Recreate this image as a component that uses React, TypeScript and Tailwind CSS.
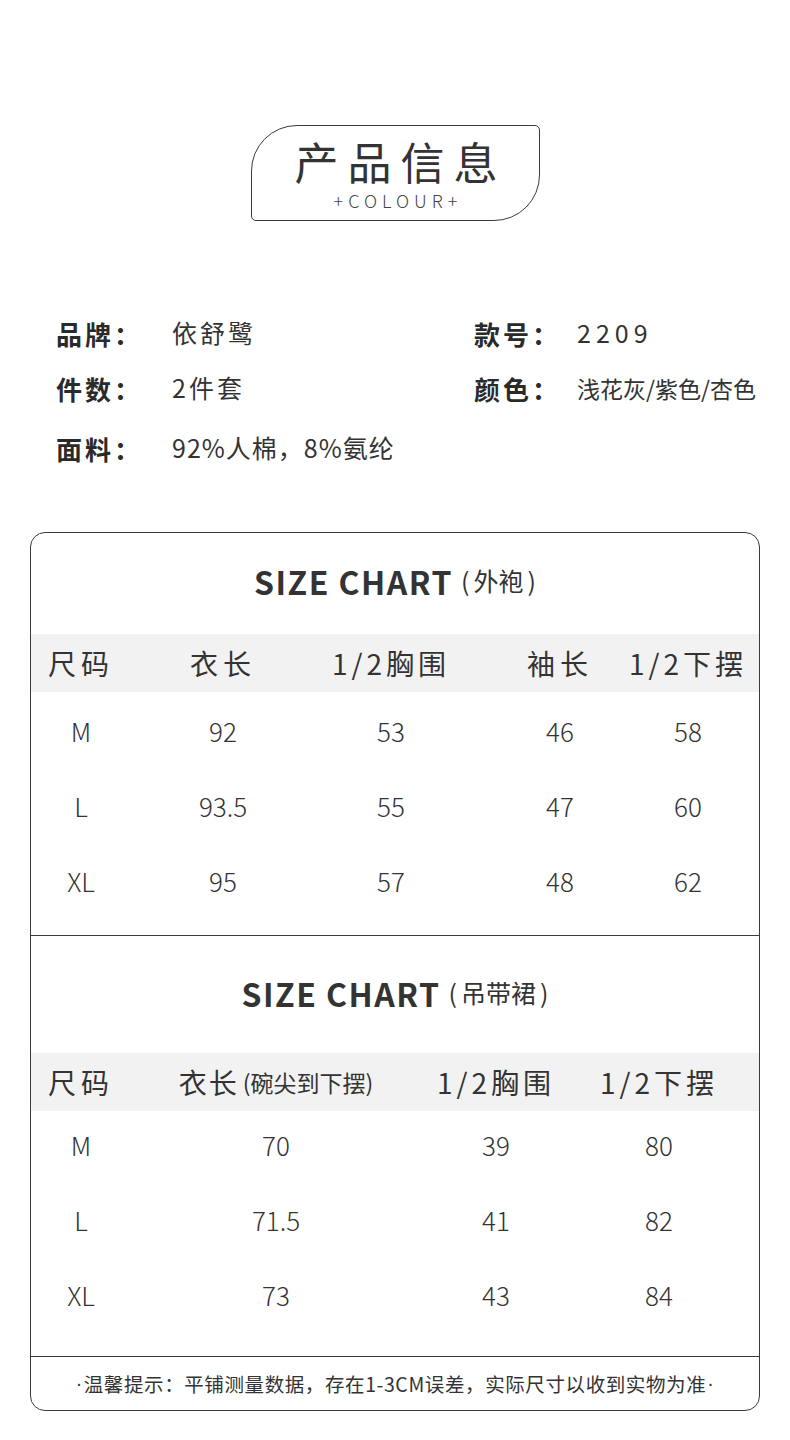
import React from "react";

const font = "font-['Noto_Sans_CJK_SC','Noto_Sans',sans-serif]";

const coat = {
  title: "(外袍)",
  cols: "grid-cols-[100px_184px_152px_186px_70px]",
  head: ["尺码", "衣长", "1/2胸围", "袖长", "1/2下摆"],
  rows: [
    ["M", "92", "53", "46", "58"],
    ["L", "93.5", "55", "47", "60"],
    ["XL", "95", "57", "48", "62"],
  ],
};

const dress = {
  title: "(吊带裙)",
  cols: "grid-cols-[100px_290px_150px_176px]",
  head: ["尺码", "衣长", "1/2胸围", "1/2下摆"],
  rows: [
    ["M", "70", "39", "80"],
    ["L", "71.5", "41", "82"],
    ["XL", "73", "43", "84"],
  ],
};

const InfoItem = ({ label, value, tight }: { label: string; value: string; tight?: boolean }) => (
  <div className="flex items-center">
    <span className="w-[116px] text-[26px] font-bold tracking-[3px] text-[#2a2a2a]">{label}</span>
    <span className={tight ? "text-[25px] tracking-[1px] text-[#333]" : "text-[25px] tracking-[3px] text-[#333]"}>
      {value}
    </span>
  </div>
);

const Chart = ({
  data,
  titleH,
  titlePb,
  bodyCls,
  dressHead,
}: {
  data: typeof coat;
  titleH: string;
  titlePb: string;
  bodyCls: string;
  dressHead?: boolean;
}) => (
  <div>
    <div className={`flex items-center justify-center ${titleH} ${titlePb}`}>
      <span className="text-[32px] font-bold tracking-[1.5px] text-[#333]">SIZE CHART</span>
      <span className="ml-2 flex items-center text-[25px] text-[#333]">
        <span className="mr-[4px]">(</span>
        {data.title.slice(1, -1)}
        <span className="ml-[4px]">)</span>
      </span>
    </div>
    <div className={`grid ${data.cols} h-[58px] items-center bg-[#f2f2f2] text-[28px] text-[#333]`}>
      {data.head.map((h, i) => (
        <div key={i} className="flex justify-center whitespace-nowrap">
          {dressHead && i === 1 ? (
            <span className="flex items-center">
              <span className="tracking-[2px]">衣长</span>
              <span className="ml-1 text-[23px]">(碗尖到下摆)</span>
            </span>
          ) : (
            <span className={h.startsWith("1/2") ? "tracking-[4px]" : "tracking-[5px]"}>{h}</span>
          )}
        </div>
      ))}
    </div>
    <div className={bodyCls}>
      {data.rows.map((r, ri) => (
        <div key={ri} className={`grid ${data.cols} h-[75px] items-center text-[26px] font-light text-[#333]`}>
          {r.map((c, ci) => (
            <div key={ci} className="flex justify-center whitespace-nowrap">
              {c}
            </div>
          ))}
        </div>
      ))}
    </div>
  </div>
);

export default function App() {
  return (
    <div className={`w-[790px] h-[1440px] bg-white ${font}`}>
      <div className="flex justify-center pt-[125px] pl-[1px]">
        <div className="flex h-[96px] w-[289px] flex-col items-center rounded-tl-[46px] rounded-br-[46px] rounded-tr-[5px] rounded-bl-[5px] border-[1.5px] border-[#3a3a3a]">
          <div className="mt-[13px] h-[44px] pl-[10px] text-[44px] leading-[44px] tracking-[9px] text-[#333]">产品信息</div>
          <div className="mt-[7px] pl-[5px] text-[18px] leading-[20px] tracking-[5px] font-light text-[#444]">+COLOUR+</div>
        </div>
      </div>

      <div className="mt-[93px] grid grid-cols-[418px_1fr] pl-[56px]">
        <div className="flex flex-col">
          <div className="h-[38px] flex items-center"><InfoItem label="品牌：" value="依舒鹭" /></div>
          <div className="mt-[17px] h-[38px] flex items-center"><InfoItem label="件数：" value="2件套" /></div>
          <div className="mt-[22px] h-[38px] flex items-center"><InfoItem label="面料：" value="92%人棉，8%氨纶" tight /></div>
        </div>
        <div className="flex flex-col">
          <div className="h-[38px] flex items-center">
            <div className="flex items-center">
              <span className="w-[103px] text-[26px] font-bold tracking-[3px] text-[#2a2a2a]">款号：</span>
              <span className="text-[25px] tracking-[5px] text-[#333]">2209</span>
            </div>
          </div>
          <div className="mt-[17px] h-[38px] flex items-center">
            <div className="flex items-center">
              <span className="w-[103px] text-[26px] font-bold tracking-[3px] text-[#2a2a2a]">颜色：</span>
              <span className="text-[23px] text-[#333]">浅花灰/紫色/杏色</span>
            </div>
          </div>
        </div>
      </div>

      <div className="mx-[30px] mt-[65px] overflow-hidden rounded-[15px] border-[1.5px] border-[#3a3a3a]">
        <Chart data={coat} titleH="h-[101px]" titlePb="pb-[6px]" bodyCls="pt-[1px] pb-[17px]" />
        <div className="border-t-[1.5px] border-[#3a3a3a]">
          <Chart data={dress} titleH="h-[117px]" titlePb="pb-[4px]" bodyCls="-mt-[4px] pb-[24px]" dressHead />
        </div>
        <div className="flex h-[54px] items-center justify-center border-t-[1.5px] border-[#3a3a3a] text-[19.5px] tracking-[0.6px] text-[#333]">
          <span className="font-['Liberation_Sans',sans-serif] mr-[1px]">·</span>
          温馨提示：平铺测量数据，存在1-3CM误差，实际尺寸以收到实物为准
          <span className="font-['Liberation_Sans',sans-serif] ml-[1px]">·</span>
        </div>
      </div>
    </div>
  );
}
